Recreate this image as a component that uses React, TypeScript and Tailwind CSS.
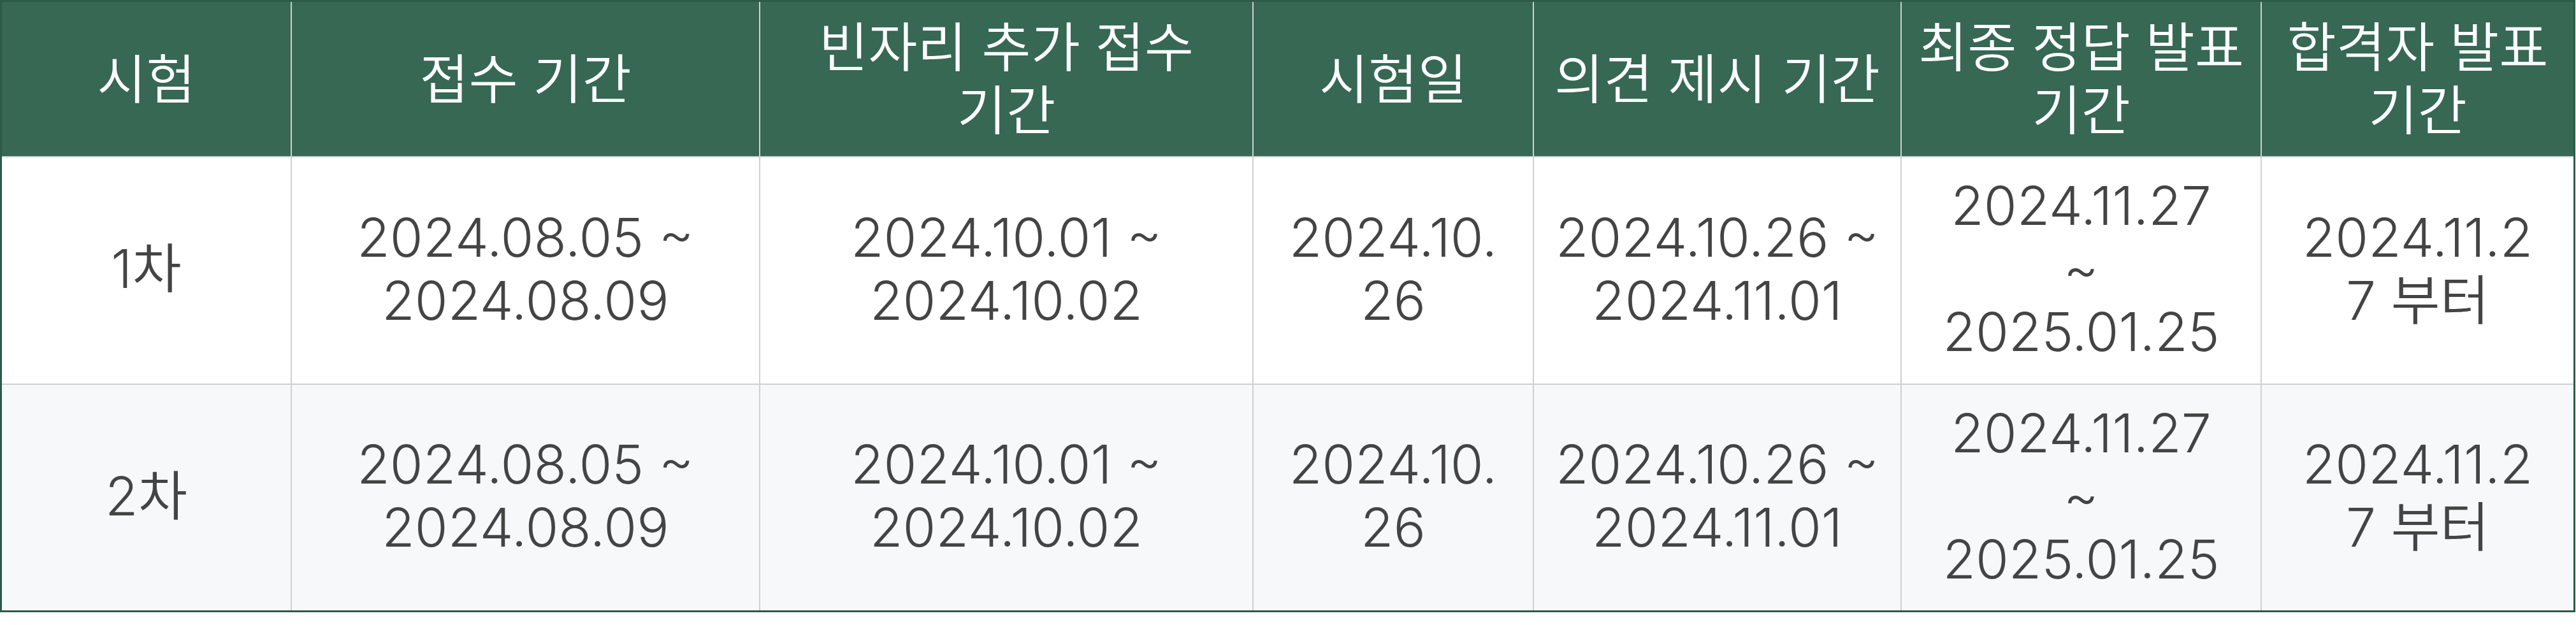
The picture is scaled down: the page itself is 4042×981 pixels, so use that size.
import React from "react";

const columns = [
  { label: ["시험"], width: "w-[453px]" },
  { label: ["접수 기간"], width: "w-[733px]" },
  { label: ["빈자리 추가 접수", "기간"], width: "w-[772px]" },
  { label: ["시험일"], width: "w-[438px]" },
  { label: ["의견 제시 기간"], width: "w-[575px]" },
  { label: ["최종 정답 발표", "기간"], width: "w-[563px]" },
  { label: ["합격자 발표", "기간"], width: "w-[489px]" },
];

const rows = [
  {
    id: "1",
    bg: "bg-white",
    height: "h-[355px]",
    cells: [
      ["1차"],
      ["2024.08.05 ~", "2024.08.09"],
      ["2024.10.01 ~", "2024.10.02"],
      ["2024.10.", "26"],
      ["2024.10.26 ~", "2024.11.01"],
      ["2024.11.27", "~", "2025.01.25"],
      ["2024.11.2", "7 부터"],
    ],
  },
  {
    id: "2",
    bg: "bg-[#f7f8fa]",
    height: "h-[354px]",
    cells: [
      ["2차"],
      ["2024.08.05 ~", "2024.08.09"],
      ["2024.10.01 ~", "2024.10.02"],
      ["2024.10.", "26"],
      ["2024.10.26 ~", "2024.11.01"],
      ["2024.11.27", "~", "2025.01.25"],
      ["2024.11.2", "7 부터"],
    ],
  },
];

function Lines({ lines }: { lines: string[] }) {
  return (
    <div className="flex flex-col items-center">
      {lines.map((line, i) => (
        <span key={i} className="whitespace-nowrap">
          {line}
        </span>
      ))}
    </div>
  );
}

export default function App() {
  return (
    <div className="min-h-screen bg-white">
      <div
        className="inline-flex flex-col gap-[2px] border-[3px] border-[#2e5a48] bg-[#d0d0d0] text-[84px] font-[350] leading-[99px]"
        style={{ fontFamily: '"Inter", "Noto Sans CJK KR", sans-serif' }}
      >
        <div className="flex gap-[2px]">
          {columns.map((col) => (
            <div
              key={col.label.join(" ")}
              className={`flex h-[242px] items-center justify-center bg-[#366853] text-center text-white ${col.width}`}
            >
              <Lines lines={col.label} />
            </div>
          ))}
        </div>
        {rows.map((row) => (
          <div key={row.id} className="flex gap-[2px]">
            {row.cells.map((cell, i) => (
              <div
                key={i}
                className={`flex items-center justify-center pb-[6px] text-center text-[#444444] ${row.bg} ${row.height} ${columns[i].width}`}
              >
                <Lines lines={cell} />
              </div>
            ))}
          </div>
        ))}
      </div>
    </div>
  );
}
